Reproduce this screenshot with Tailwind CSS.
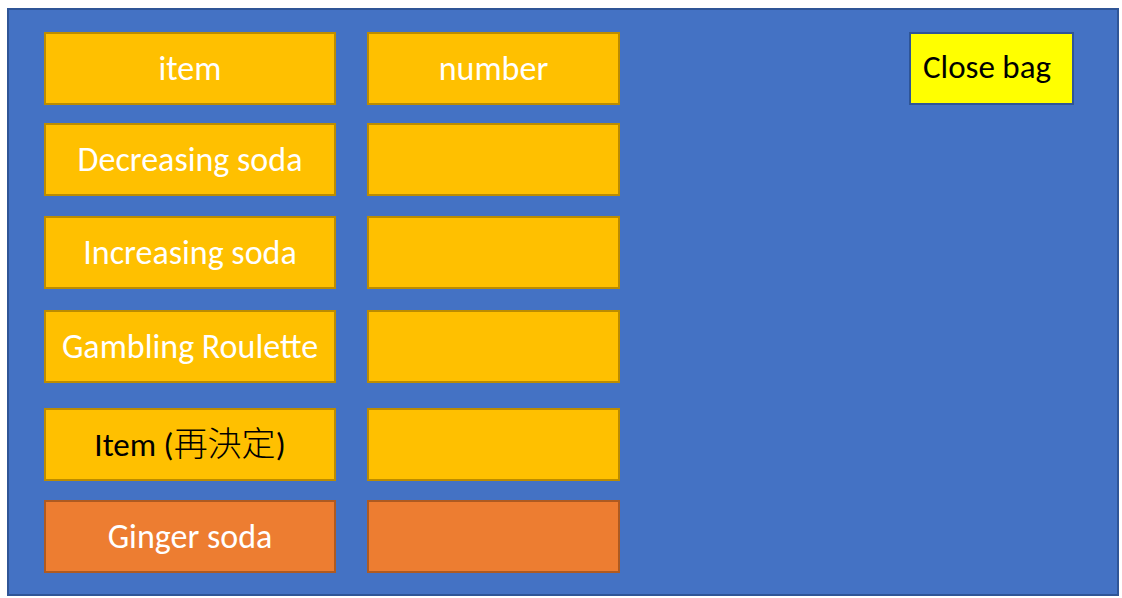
<!DOCTYPE html>
<html lang="en">
<head>
<meta charset="utf-8">
<meta name="viewport" content="width=device-width, initial-scale=1">
<title>Bag</title>
<script src="https://cdn.jsdelivr.net/npm/@tailwindcss/browser@4"></script>
</head>
<body class="flex min-h-screen flex-col bg-white pt-2 pr-[3px] pb-[2px] pl-[7px] font-['Carlito','Lato','Noto_Sans_CJK_TC',sans-serif] text-[34px] leading-9">
<main class="flex flex-1 items-start justify-between gap-8 border-2 border-[#2f5597] bg-[#4472c4] pt-[22px] pr-[43px] pl-[35px]">
  <table class="border-collapse text-center text-white">
    <thead>
      <tr>
        <th scope="col" class="p-0 pr-[31px] pb-[18px] font-normal"><div class="flex h-[73px] w-[292px] items-center justify-center border-2 border-[#bc8c00] bg-[#ffc000]">item</div></th>
        <th scope="col" class="p-0 pb-[18px] font-normal"><div class="flex h-[73px] w-[253px] items-center justify-center border-2 border-[#bc8c00] bg-[#ffc000]">number</div></th>
      </tr>
    </thead>
    <tbody>
      <tr>
        <td class="p-0 pr-[31px] pb-5"><div class="flex h-[73px] w-[292px] items-center justify-center border-2 border-[#bc8c00] bg-[#ffc000]">Decreasing soda</div></td>
        <td class="p-0 pb-5"><div class="h-[73px] w-[253px] border-2 border-[#bc8c00] bg-[#ffc000]"></div></td>
      </tr>
      <tr>
        <td class="p-0 pr-[31px] pb-[21px]"><div class="flex h-[73px] w-[292px] items-center justify-center border-2 border-[#bc8c00] bg-[#ffc000]">Increasing soda</div></td>
        <td class="p-0 pb-[21px]"><div class="h-[73px] w-[253px] border-2 border-[#bc8c00] bg-[#ffc000]"></div></td>
      </tr>
      <tr>
        <td class="p-0 pr-[31px] pb-[25px]"><div class="flex h-[73px] w-[292px] items-center justify-center border-2 border-[#bc8c00] bg-[#ffc000]">Gambling Roulette</div></td>
        <td class="p-0 pb-[25px]"><div class="h-[73px] w-[253px] border-2 border-[#bc8c00] bg-[#ffc000]"></div></td>
      </tr>
      <tr>
        <td class="p-0 pr-[31px] pb-[19px]"><div class="flex h-[73px] w-[292px] items-center justify-center border-2 border-[#bc8c00] bg-[#ffc000] text-[33px] leading-9 text-black"><span>Item (<span lang="zh-Hant" class="text-[34px] leading-9 font-light">再決定</span>)</span></div></td>
        <td class="p-0 pb-[19px]"><div class="h-[73px] w-[253px] border-2 border-[#bc8c00] bg-[#ffc000]"></div></td>
      </tr>
      <tr>
        <td class="p-0 pr-[31px]"><div class="flex h-[73px] w-[292px] items-center justify-center border-2 border-[#ae5a21] bg-[#ed7d31]">Ginger soda</div></td>
        <td class="p-0"><div class="h-[73px] w-[253px] border-2 border-[#ae5a21] bg-[#ed7d31]"></div></td>
      </tr>
    </tbody>
  </table>
  <button type="button" class="h-[73px] w-[165px] shrink-0 border-2 border-[#2f5597] bg-[#ffff00] px-3 pb-1 text-left text-[33px] leading-9 whitespace-nowrap text-black">Close bag</button>
</main>
</body>
</html>
